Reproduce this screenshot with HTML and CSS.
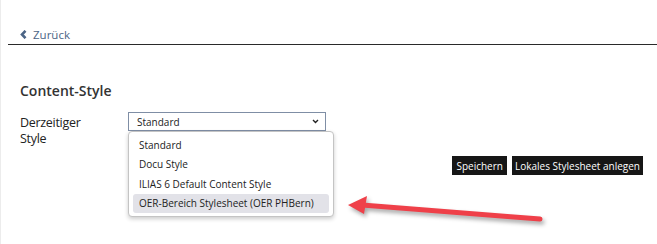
FILE: index.html
```html
<!DOCTYPE html>
<html lang="de">
<head>
  <meta charset="UTF-8">
  <title>Content-Style</title>
  <link rel="stylesheet" href="styles.css">
</head>
<body>
  <div class="page">
    <div class="back-bar">
      <a class="back-link" href="#">
        <svg class="chevron" width="7" height="9" viewBox="0 0 7 9"><path d="M5.5 0.8 L2 4.5 L5.5 8.2" fill="none" stroke="#4c6586" stroke-width="2.6"/></svg>
        Zurück
      </a>
    </div>

    <div class="content">
      <h2>Content-Style</h2>

      <div class="form-row">
        <label class="form-label">Derzeitiger Style</label>
        <div class="field">
          <div class="select">
            <span>Standard</span>
            <svg class="caret" width="7" height="5" viewBox="0 0 7 5"><path d="M1 1 L3.5 3.5 L6 1" fill="none" stroke="#222" stroke-width="1.4"/></svg>
          </div>
          <ul class="dropdown">
            <li>Standard</li>
            <li>Docu Style</li>
            <li>ILIAS 6 Default Content Style</li>
            <li class="hover">OER-Bereich Stylesheet (OER PHBern)</li>
          </ul>
        </div>
      </div>

      <div class="form-actions">
        <button>Speichern</button>
        <button>Lokales Stylesheet anlegen</button>
      </div>
    </div>

    <svg class="annotation" width="215" height="45" viewBox="0 0 215 45">
      <line x1="22" y1="20" x2="200" y2="34" stroke="#ef4049" stroke-width="5" stroke-linecap="round"/>
      <polygon points="8,20 27,11 24,29" fill="#ef4049"/>
    </svg>
  </div>
</body>
</html>
```

FILE: styles.css
```css
* {
  box-sizing: border-box;
  margin: 0;
  padding: 0;
}

body {
  font-family: 'Open Sans', 'Liberation Sans', sans-serif;
  color: #222;
  background: #fff;
}

.page {
  position: relative;
  min-height: 244px;
  border-left: 1px solid #ececec;
}

/* back link */
.back-bar {
  display: flex;
  margin-left: 7px;
  padding: 27px 12px 2px;
  border-bottom: 1px solid #2a2a2a;
}

.back-link {
  display: flex;
  align-items: center;
  gap: 6px;
  color: #4c6586;
  text-decoration: none;
  font-size: 11.5px;
  line-height: 15px;
}

/* form */
.content {
  padding: 36px 14px 0 19px;
}

h2 {
  font-size: 14px;
  line-height: 19px;
  font-weight: 600;
  color: #333;
  margin-bottom: 12px;
}

.form-row {
  display: flex;
}

.form-label {
  width: 108px;
  padding-right: 30px;
  font-size: 12.5px;
  letter-spacing: -0.3px;
  line-height: 16px;
  color: #222;
  padding-top: 3px;
}

.field {
  position: relative;
}

.select {
  width: 198px;
  height: 19px;
  border: 1px solid #7f8ea5;
  display: flex;
  align-items: center;
  justify-content: space-between;
  padding: 0 6px 0 8px;
  font-size: 10px;
  color: #222;
}

.dropdown {
  position: absolute;
  top: 19px;
  left: 0;
  width: 206px;
  list-style: none;
  background: #fff;
  border: 1px solid #c4c4c4;
  border-radius: 4px;
  box-shadow: 0 2px 4px rgba(0, 0, 0, 0.2);
  padding: 4px 4px 3px;
  font-size: 10px;
  color: #222;
}

.dropdown li {
  height: 19.3px;
  line-height: 19px;
  padding-left: 6px;
  border-radius: 3px;
  white-space: nowrap;
}

.dropdown li.hover {
  background: #e2e2e8;
}

.form-actions {
  display: flex;
  justify-content: flex-end;
  gap: 5px;
  margin-top: 9px;
}

button {
  background: #161616;
  color: #fff;
  border: none;
  font-family: inherit;
  font-size: 10px;
  height: 19px;
  padding: 0 4px;
}

button + button {
  padding: 0 3px;
}

/* red annotation arrow */
.annotation {
  position: absolute;
  left: 339px;
  top: 185px;
  filter: drop-shadow(2px 3px 2px rgba(0, 0, 0, 0.35));
}
```
